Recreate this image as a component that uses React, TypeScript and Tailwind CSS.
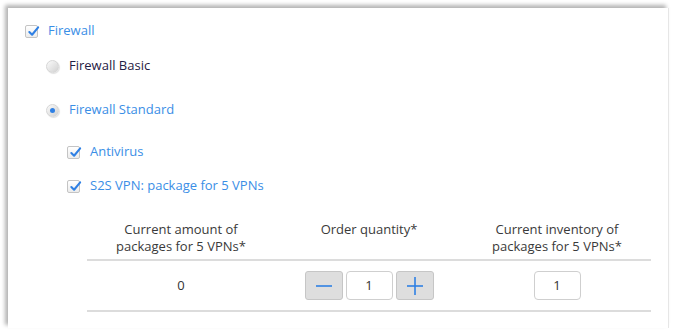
import React from 'react';

const font = { fontFamily: '"Open Sans", "Noto Sans", sans-serif' };

function CheckBox() {
  return (
    <span className="relative inline-block w-[13px] h-[13px] shrink-0 rounded-[2px] border border-[#c4c4c4] bg-gradient-to-b from-white to-[#ececec]">
      <svg viewBox="0 0 14 14" className="absolute left-[1px] top-[-1px] w-[13px] h-[13px]">
        <path d="M2.5 7.5 L5.5 10.5 L12 2.5" fill="none" stroke="#2f80e4" strokeWidth="2.2" strokeLinecap="round" strokeLinejoin="round" />
      </svg>
    </span>
  );
}

function Radio({ checked }: { checked?: boolean }) {
  return (
    <span className="flex items-center justify-center w-[13px] h-[13px] shrink-0 rounded-full border border-[#d6d6d6] bg-gradient-to-br from-[#fbfbfb] to-[#d2d2d2] shadow-[1px_1px_1px_rgba(0,0,0,0.12)]">
      {checked && <span className="w-[5px] h-[5px] rounded-full bg-[#2f80e4]" />}
    </span>
  );
}

function StepButton({ plus }: { plus?: boolean }) {
  return (
    <button className="flex items-center justify-center w-[38px] h-[29px] rounded-[3px] border border-[#c6c6c6] bg-[#dedede]">
      <svg viewBox="0 0 20 20" className="w-[20px] h-[20px]">
        <path d="M2 10 H18" stroke="#2f80e4" strokeWidth="1.6" />
        {plus && <path d="M10 1 V19" stroke="#2f80e4" strokeWidth="1.6" />}
      </svg>
    </button>
  );
}

function ValueBox() {
  return (
    <div className="flex items-center justify-center w-[47px] h-[29px] rounded-[4px] border border-[#cfcfcf] bg-white text-[13px] text-[#333]">
      1
    </div>
  );
}

export default function App() {
  return (
    <div className="w-[673px] h-[331px] bg-white overflow-hidden" style={font}>
      <div className="ml-[8px] mt-[8px] w-[661px] h-[320px] bg-white border-r border-[#e6e6e6] shadow-[-3px_-3px_4px_rgba(0,0,0,0.3)] pt-[13px]">
        <div className="flex items-center h-[20px] pl-[17px] gap-[10px] text-[13px] text-[#3a8ee6]">
          <CheckBox />
          <span>Firewall</span>
        </div>

        <div className="flex items-center h-[20px] mt-[15px] pl-[38px] gap-[10px] text-[13px] text-[#1f2144]">
          <Radio />
          <span>Firewall Basic</span>
        </div>

        <div className="flex items-center h-[20px] mt-[24px] pl-[38px] gap-[10px] text-[13px] text-[#3a8ee6]">
          <Radio checked />
          <span>Firewall Standard</span>
        </div>

        <div className="flex items-center h-[20px] mt-[22px] pl-[59px] gap-[10px] text-[13px] text-[#3a8ee6]">
          <CheckBox />
          <span>Antivirus</span>
        </div>

        <div className="flex items-center h-[20px] mt-[14px] pl-[59px] gap-[10px] text-[13px] text-[#3a8ee6]">
          <CheckBox />
          <span>S2S VPN: package for 5 VPNs</span>
        </div>

        <div className="ml-[79px] w-[564px] mt-[25px]">
          <div className="grid grid-cols-3 pb-[4px] border-b-2 border-[#dcdcdc] text-[13px] leading-[17px] text-[#3a3a3a] text-center">
            <div className="flex flex-col items-center">
              <span>Current amount of</span>
              <span>packages for 5 VPNs*</span>
            </div>
            <div>Order quantity*</div>
            <div className="flex flex-col items-center">
              <span>Current inventory of</span>
              <span>packages for 5 VPNs*</span>
            </div>
          </div>
          <div className="grid grid-cols-3 items-center h-[51px] border-b-2 border-[#dcdcdc] text-[13px] text-[#333] text-center">
            <div>0</div>
            <div className="flex items-center justify-center gap-[3px]">
              <StepButton />
              <ValueBox />
              <StepButton plus />
            </div>
            <div className="flex justify-center">
              <ValueBox />
            </div>
          </div>
        </div>
      </div>
    </div>
  );
}
